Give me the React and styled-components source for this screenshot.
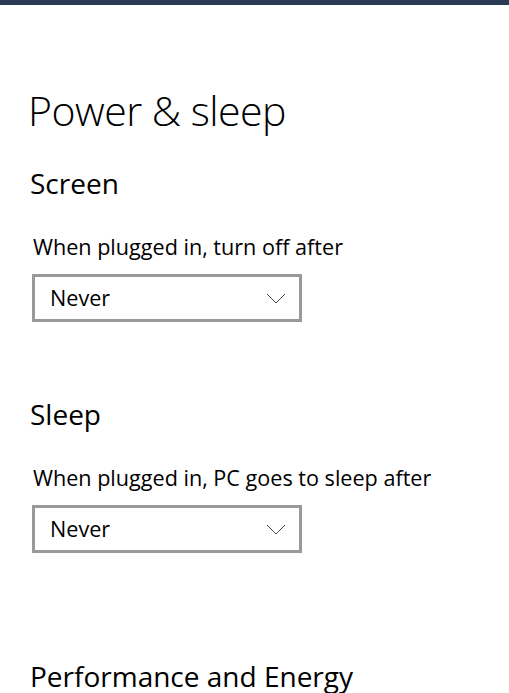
import styled, { createGlobalStyle } from 'styled-components';

const GlobalStyle = createGlobalStyle`
    * { box-sizing: border-box; }
    body {
        margin: 0;
        background: #fff;
        font-family: "Open Sans", "Noto Sans", "Liberation Sans", sans-serif;
        color: #000;
        overflow: hidden;
    }
`;

function Chevron() {
    return (
        <svg width="20" height="11" viewBox="0 0 20 11" fill="none">
            <path d="M1 1 L10 10 L19 1" stroke="#4a4a4a" strokeWidth="1" />
        </svg>
    );
}

function Dropdown({ value }) {
    return (
        <Select>
            <span>{value}</span>
            <Chevron />
        </Select>
    );
}

export default function App() {
    return (
        <>
            <GlobalStyle />
            <TopBar />
            <Page>
                <Title>Power &amp; sleep</Title>

                <SectionTitle $gap={29}>Screen</SectionTitle>
                <Label>When plugged in, turn off after</Label>
                <Dropdown value="Never" />

                <SectionTitle $gap={74}>Sleep</SectionTitle>
                <Label>When plugged in, PC goes to sleep after</Label>
                <Dropdown value="Never" />

                <SectionTitle $gap={105}>Performance and Energy</SectionTitle>
            </Page>
        </>
    );
}

/* --- STYLES --- */
const TopBar = styled.div`
    height: 5px;
    background: #2b3a55;
`;

const Page = styled.div`
    display: flex;
    flex-direction: column;
    align-items: flex-start;
    padding-left: 29px;
`;

const Title = styled.h1`
    margin: 79px 0 0 -1px;
    font-size: 41px;
    font-weight: 300;
    line-height: 52px;
    letter-spacing: -0.5px;
    white-space: nowrap;
`;

const SectionTitle = styled.h2`
    margin: ${p => p.$gap}px 0 0 1px;
    font-size: 28px;
    font-weight: 400;
    line-height: 36px;
    white-space: nowrap;
`;

const Label = styled.div`
    margin: 32px 0 0 4px;
    font-size: 21.6px;
    line-height: 28px;
    white-space: nowrap;
`;

const Select = styled.div`
    margin: 13px 0 0 3px;
    width: 270px;
    height: 48px;
    border: 3px solid #999;
    display: flex;
    align-items: center;
    justify-content: space-between;
    padding: 0 13px 0 15px;
    font-size: 21.6px;
    span { line-height: 1; }
`;
